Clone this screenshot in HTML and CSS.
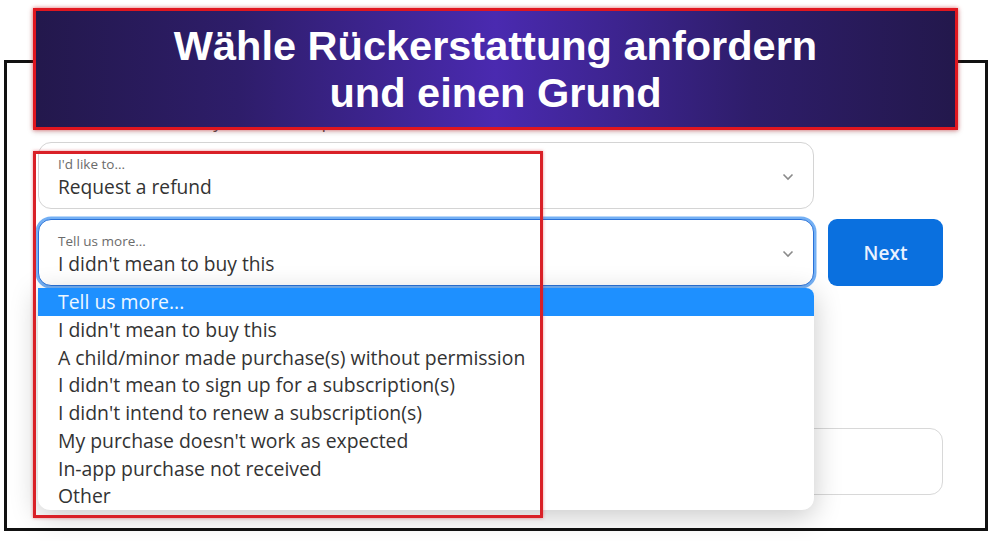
FILE: index.html
```html
<!DOCTYPE html>
<html lang="de">
<head>
<meta charset="utf-8">
<title>Rückerstattung</title>
<link rel="stylesheet" href="styles.css">
</head>
<body>
<div class="frame">
  <div class="peek">What do you need help with?</div>
  <div class="form">
    <div class="select s1">
      <div class="sel-label">I'd like to...</div>
      <div class="sel-value">Request a refund</div>
      <svg class="chev" width="12" height="8" viewBox="0 0 12 8"><path d="M1.5 1.5 L6 6 L10.5 1.5" fill="none" stroke="#8a8a8a" stroke-width="1.6"/></svg>
    </div>
    <div class="select s2 focus">
      <div class="sel-label">Tell us more...</div>
      <div class="sel-value">I didn't mean to buy this</div>
      <svg class="chev" width="12" height="8" viewBox="0 0 12 8"><path d="M1.5 1.5 L6 6 L10.5 1.5" fill="none" stroke="#8a8a8a" stroke-width="1.6"/></svg>
      <ul class="menu">
        <li class="active">Tell us more...</li>
        <li>I didn't mean to buy this</li>
        <li>A child/minor made purchase(s) without permission</li>
        <li>I didn't mean to sign up for a subscription(s)</li>
        <li>I didn't intend to renew a subscription(s)</li>
        <li>My purchase doesn't work as expected</li>
        <li>In-app purchase not received</li>
        <li>Other</li>
      </ul>
    </div>
    <button class="next">Next</button>
  </div>
  <div class="field"></div>
</div>
<div class="banner">
  <h1>Wähle Rückerstattung anfordern<br>und einen Grund</h1>
</div>
<div class="highlight"></div>
</body>
</html>
```
FILE: styles.css
```css
html, body { margin: 0; padding: 0; background: #ffffff; }
body {
  position: relative;
  width: 992px;
  height: 541px;
  overflow: hidden;
  font-family: "Open Sans", "Noto Sans", sans-serif;
  color: #333333;
}
.frame {
  margin: 60px 0 0 4px;
  width: 984px;
  height: 471px;
  box-sizing: border-box;
  border: 3px solid #111111;
  padding: 0 0 0 31px;
  background: #ffffff;
}
.peek {
  margin-top: 46px;
  height: 33px;
  font-size: 18px;
  line-height: 24px;
  color: #555;
  padding-left: 100px;
}
.form {
  display: grid;
  grid-template-columns: 776px 115px;
  column-gap: 14px;
  row-gap: 10px;
}
.select {
  position: relative;
  height: 67px;
  box-sizing: border-box;
  border: 1px solid #d4d4d4;
  border-radius: 13px;
  padding: 12px 0 0 19px;
  background: #ffffff;
}
.s1 { grid-column: 1; grid-row: 1; }
.s2 { grid-column: 1; grid-row: 2; }
.focus {
  border: 1px solid #2a72d8;
  box-shadow: 0 0 0 2.5px #74b0f4;
}
.sel-label {
  font-size: 13.5px;
  line-height: 18px;
  color: #6b6b6b;
}
.sel-value {
  margin-top: 1px;
  font-size: 19.2px;
  line-height: 26px;
  color: #333333;
}
.chev {
  position: absolute;
  right: 19px;
  top: 30px;
}
.next {
  grid-column: 2;
  grid-row: 2;
  height: 67px;
  border: none;
  border-radius: 9px;
  background: #0a70df;
  color: #eaf2ff;
  font-family: "Open Sans", "Noto Sans", sans-serif;
  font-size: 19px;
  font-weight: 600;
}
.menu {
  position: absolute;
  left: -1px;
  top: 68px;
  width: 776px;
  margin: 0;
  padding: 0;
  list-style: none;
  background: #ffffff;
  border-radius: 0 8px 12px 12px;
  box-shadow: 0 6px 28px rgba(0, 0, 0, 0.22);
  overflow: hidden;
  z-index: 2;
}
.menu li {
  height: 27.75px;
  line-height: 27px;
  padding-left: 20px;
  font-size: 19.4px;
  color: #333333;
}
.menu li.active {
  background: #1e90ff;
  color: #eef7ff;
}
.field {
  margin-top: 142px;
  width: 905px;
  height: 67px;
  box-sizing: border-box;
  border: 1px solid #d8d8d8;
  border-radius: 13px;
}
.banner {
  position: absolute;
  left: 33px;
  top: 8px;
  width: 925px;
  height: 122px;
  box-sizing: border-box;
  border: 3px solid #e0161f;
  box-shadow: 0 0 4px rgba(224, 22, 31, 0.6), 0 2px 6px rgba(0,0,0,0.15);
  background: linear-gradient(90deg, #23184c 0%, #2e1d6a 22%, #4a2ab0 50%, #2e1d6a 78%, #23184c 100%);
  display: flex;
  align-items: center;
  justify-content: center;
  z-index: 5;
}
.banner h1 {
  margin: 0;
  font-family: "Liberation Sans", Arial, sans-serif;
  font-weight: 700;
  font-size: 41.5px;
  line-height: 47px;
  color: #ffffff;
  text-align: center;
}
.highlight {
  position: absolute;
  left: 33px;
  top: 151px;
  width: 510px;
  height: 367px;
  box-sizing: border-box;
  border: 3px solid #d92027;
  box-shadow: 0 0 3px rgba(217, 32, 39, 0.5);
  z-index: 6;
}
```
